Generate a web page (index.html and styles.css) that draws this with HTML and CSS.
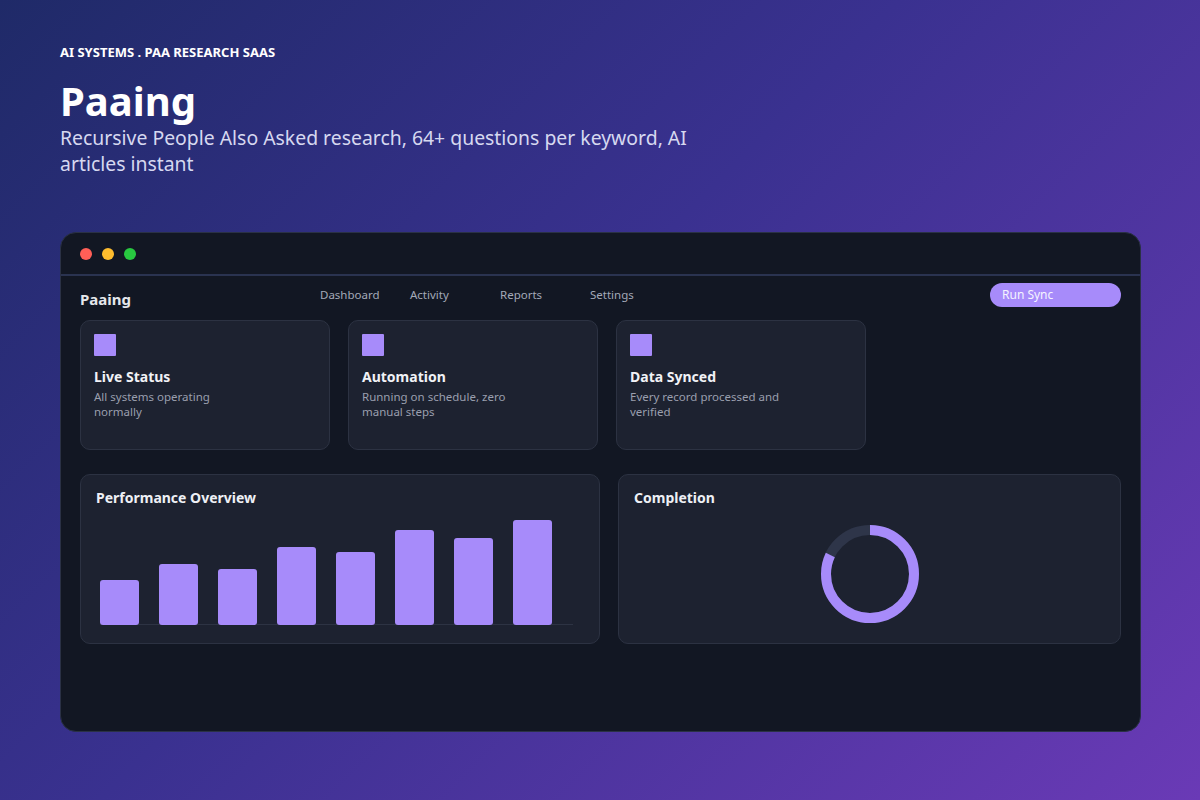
FILE: index.html
```html
<!DOCTYPE html>
<html lang="en">
<head>
<meta charset="utf-8">
<title>Paaing</title>
<link rel="stylesheet" href="styles.css">
</head>
<body>
<div class="page">
  <header class="hero">
    <div class="eyebrow">AI SYSTEMS . PAA RESEARCH SAAS</div>
    <h1 class="title">Paaing</h1>
    <p class="subtitle">Recursive People Also Asked research, 64+ questions per keyword, AI articles instant</p>
  </header>

  <div class="window">
    <div class="titlebar">
      <span class="dot dot-red"></span>
      <span class="dot dot-yellow"></span>
      <span class="dot dot-green"></span>
    </div>
    <div class="app">
      <nav class="navrow">
        <div class="brand">Paaing</div>
        <a class="navlink">Dashboard</a>
        <a class="navlink">Activity</a>
        <a class="navlink">Reports</a>
        <a class="navlink">Settings</a>
        <button class="btn">Run Sync</button>
      </nav>

      <div class="cards">
        <div class="card">
          <div class="card-icon"></div>
          <div class="card-title">Live Status</div>
          <div class="card-desc">All systems operating normally</div>
        </div>
        <div class="card">
          <div class="card-icon"></div>
          <div class="card-title">Automation</div>
          <div class="card-desc">Running on schedule, zero manual steps</div>
        </div>
        <div class="card">
          <div class="card-icon"></div>
          <div class="card-title">Data Synced</div>
          <div class="card-desc">Every record processed and verified</div>
        </div>
      </div>

      <div class="panels">
        <section class="panel panel-chart">
          <h2 class="panel-title">Performance Overview</h2>
          <div class="chart">
            <div class="bar" style="height:45px"></div>
            <div class="bar" style="height:61px"></div>
            <div class="bar" style="height:56px"></div>
            <div class="bar" style="height:78px"></div>
            <div class="bar" style="height:73px"></div>
            <div class="bar" style="height:95px"></div>
            <div class="bar" style="height:87px"></div>
            <div class="bar" style="height:105px"></div>
          </div>
        </section>
        <section class="panel panel-donut">
          <h2 class="panel-title">Completion</h2>
          <div class="donut-wrap">
            <svg class="donut" width="100" height="100" viewBox="0 0 100 100">
              <circle cx="50" cy="50" r="44" fill="none" stroke="#2e3549" stroke-width="10"/>
              <circle cx="50" cy="50" r="44" fill="none" stroke="#a78bfa" stroke-width="10"
                      stroke-dasharray="226.7 276.5" transform="rotate(-90 50 50)"/>
            </svg>
          </div>
        </section>
      </div>
    </div>
  </div>
</div>
</body>
</html>
```

FILE: styles.css
```css
* { box-sizing: border-box; }

html, body {
  margin: 0;
  padding: 0;
}

body {
  width: 1200px;
  height: 800px;
  overflow: hidden;
  background: linear-gradient(135deg, #1f2a68 0%, #3a3190 45%, #6a3ab6 100%);
  font-family: "Noto Sans", "Open Sans", "DejaVu Sans", sans-serif;
  color: #f3f4f6;
}

.page {
  padding: 44px 60px 0 60px;
}

.eyebrow {
  font-size: 13px;
  font-weight: 700;
  line-height: 16px;
  color: #ffffff;
  letter-spacing: 0;
}

.title {
  margin: 17px 0 0 0;
  font-size: 40px;
  font-weight: 700;
  line-height: 48px;
  color: #ffffff;
}

.subtitle {
  margin: 0;
  max-width: 650px;
  font-size: 19.4px;
  line-height: 26px;
  color: #d6d8f0;
}

.window {
  margin-top: 55px;
  width: 1081px;
  height: 500px;
  background: #121723;
  border: 1px solid #2a3145;
  border-radius: 16px;
  overflow: hidden;
}

.titlebar {
  height: 43px;
  display: flex;
  align-items: center;
  gap: 10px;
  padding-left: 19px;
  border-bottom: 2px solid #2a3350;
}

.dot {
  width: 12px;
  height: 12px;
  border-radius: 50%;
}
.dot-red { background: #ff5f57; }
.dot-yellow { background: #febc2e; }
.dot-green { background: #28c840; }

.app {
  padding: 0 19px;
}

.navrow {
  margin-top: 7px;
  height: 23px;
  display: flex;
  align-items: center;
}

.brand {
  width: 240px;
  flex: none;
  margin-top: 8px;
  font-size: 15px;
  font-weight: 700;
  color: #e5e7eb;
}

.navlink {
  width: 90px;
  flex: none;
  font-size: 11.5px;
  color: #a3a9b8;
}

.btn {
  margin-left: auto;
  width: 131px;
  height: 24px;
  border: none;
  border-radius: 12px;
  background: #a78bfa;
  color: #f5f3ff;
  font-family: inherit;
  font-size: 12px;
  text-align: left;
  padding: 0 12px;
}

.cards {
  margin-top: 14px;
  display: flex;
  gap: 18px;
}

.card {
  width: 250px;
  height: 130px;
  background: #1d2230;
  border: 1px solid #2c3242;
  border-radius: 10px;
  padding: 13px;
}

.card-icon {
  width: 22px;
  height: 22px;
  background: #a78bfa;
  border-radius: 1px;
}

.card-title {
  margin-top: 11px;
  font-size: 14px;
  font-weight: 700;
  line-height: 20px;
  color: #f1f2f6;
}

.card-desc {
  margin-top: 2px;
  max-width: 160px;
  font-size: 11.5px;
  line-height: 15px;
  color: #9a9fae;
}

.panels {
  margin-top: 24px;
  display: grid;
  grid-template-columns: 520px 1fr;
  gap: 18px;
}

.panel {
  height: 170px;
  background: #1d2230;
  border: 1px solid #2c3242;
  border-radius: 10px;
  padding: 13px 15px 0 15px;
}

.panel-title {
  margin: 0;
  font-size: 14px;
  font-weight: 700;
  line-height: 20px;
  color: #eef0f5;
}

.chart {
  margin-left: 4px;
  width: 473px;
  height: 117px;
  display: flex;
  align-items: flex-end;
  gap: 20px;
  border-bottom: 1px solid #2d3343;
}

.bar {
  width: 39px;
  flex: none;
  background: #a78bfa;
  border-radius: 3px;
  margin-bottom: -1px;
}

.donut-wrap {
  margin-top: 16px;
  display: flex;
  justify-content: center;
}

.donut {
  display: block;
}
```
